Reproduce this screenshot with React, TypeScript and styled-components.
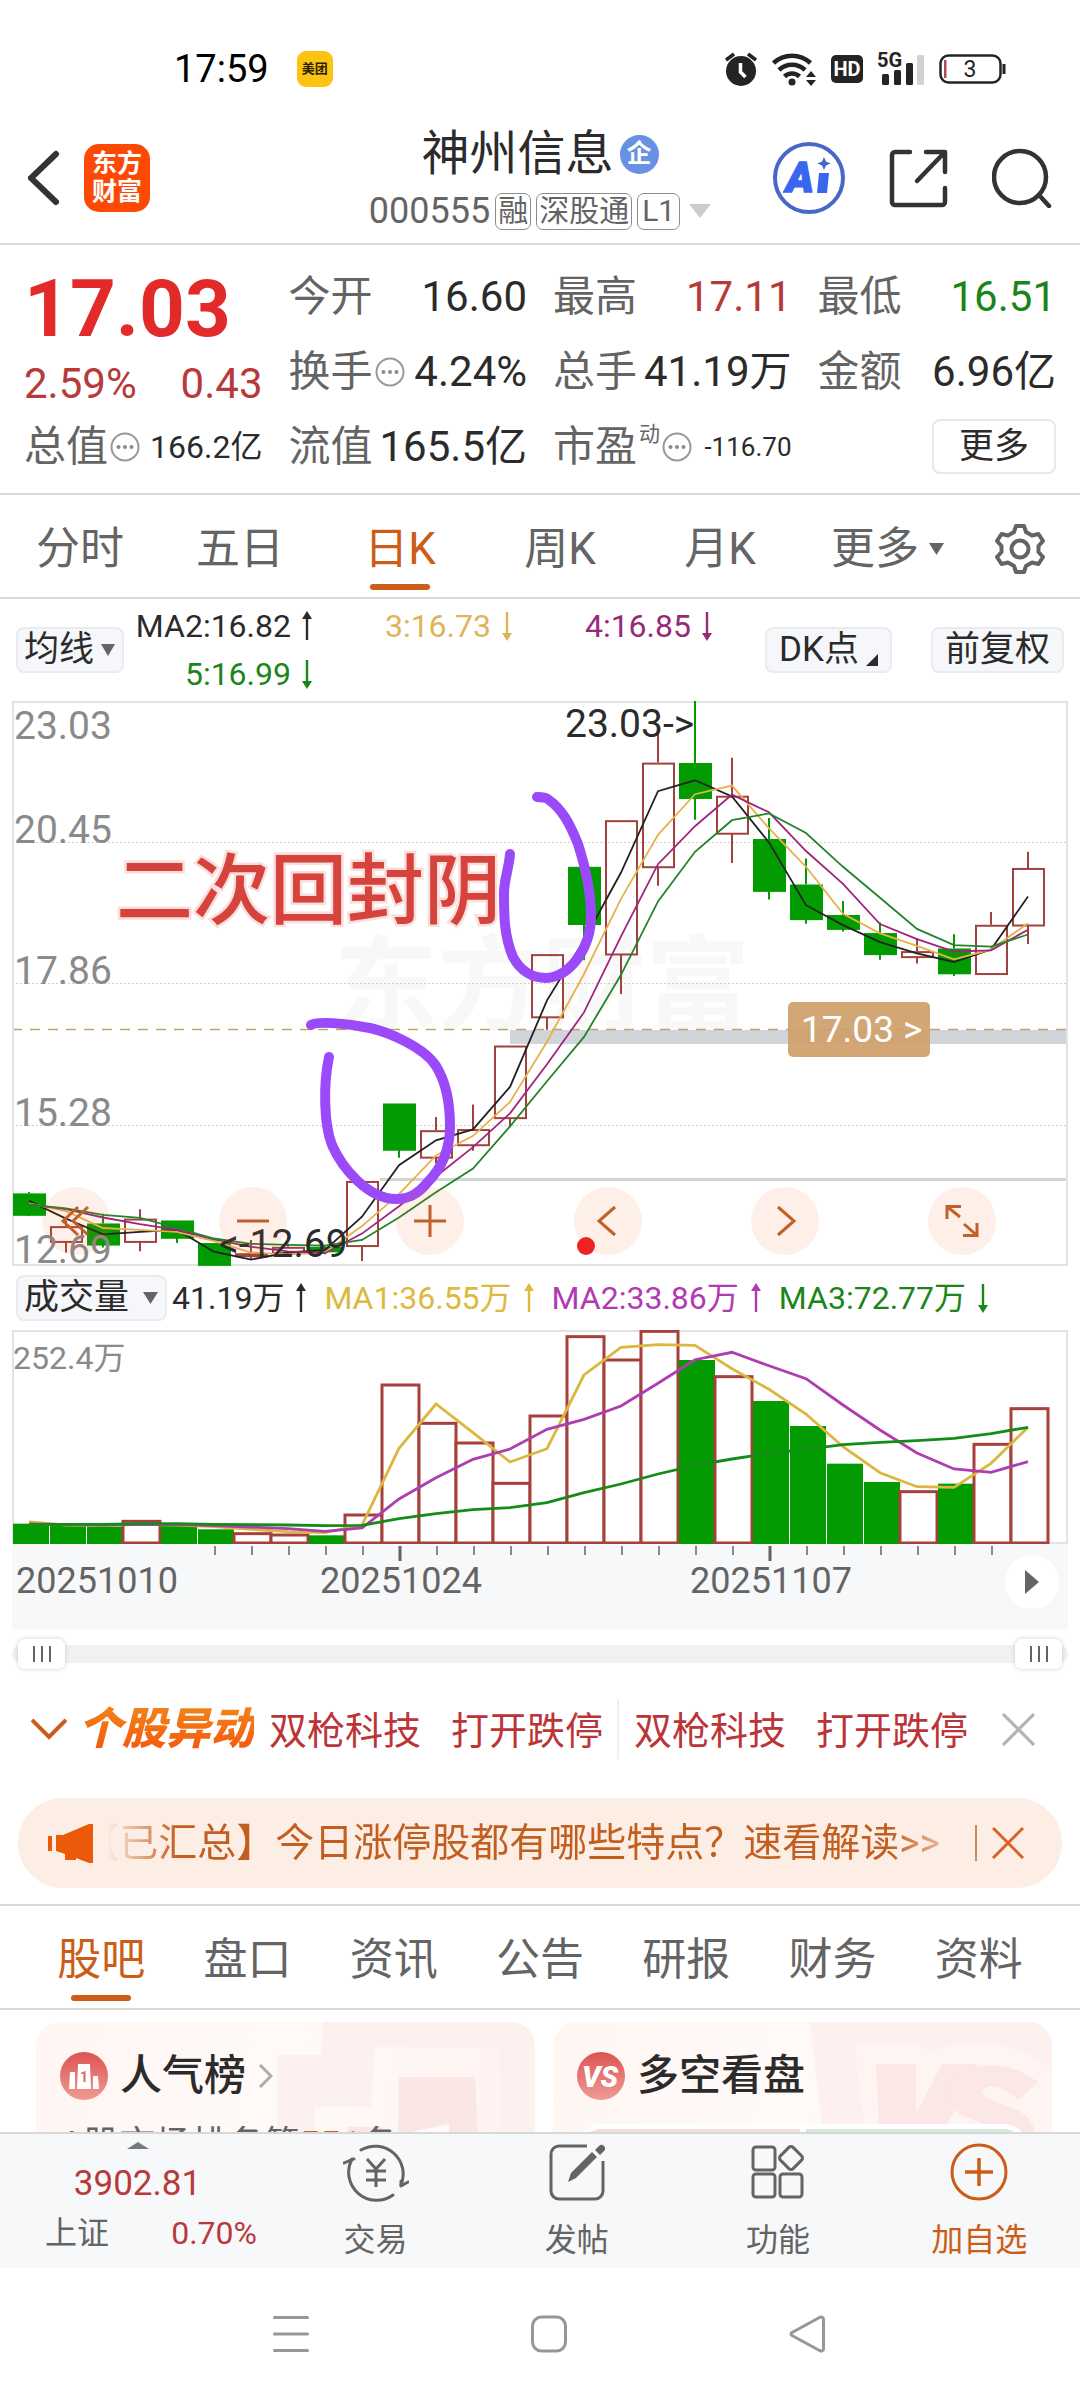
import React from "react";
import styled, { createGlobalStyle, css } from "styled-components";

const INK = "#2b2b2b";
const GREY = "#646464";
const ORANGE = "#cc5c18";
const RED = "#b73a3a";
const GREEN = "#1b851b";
const LINE = "#d8d8d8";

const Global = createGlobalStyle`
  * { box-sizing: border-box; }
  body {
    margin: 0;
    background: #fff;
    color: ${INK};
    font-family: Roboto, "Noto Sans CJK SC", sans-serif;
  }
  button, select, input { font: inherit; color: inherit; margin: 0; padding: 0; border: 0; background: none; }
  button { cursor: pointer; }
  a { color: inherit; text-decoration: none; }
  svg { display: block; flex: none; }
  h1, h2, p, dl, dd, dt { margin: 0; font-weight: 400; }
`;

const Shell = styled.div`
  display: flex;
  flex-direction: column;
  min-height: 100vh;
`;

/* ---------- status bar ---------- */

const StatusBar = styled.div`
  display: flex;
  align-items: center;
  justify-content: space-between;
  height: 108px;
  padding: 30px 74px 0 174px;
`;
const Cluster = styled.div<{ $gap: number }>`
  display: flex;
  align-items: center;
  gap: ${(p) => p.$gap}px;
`;
const Clock = styled.time`
  font-size: 38px;
  line-height: 44px;
  color: #000;
`;
const Meituan = styled.span`
  display: grid;
  place-items: center;
  width: 36px;
  height: 36px;
  border-radius: 9px;
  background: #fbc413;
  color: #2b2300;
  font-size: 13px;
  line-height: 16px;
  font-weight: 700;
`;
const HdBadge = styled.span`
  display: grid;
  place-items: center;
  width: 32px;
  height: 28px;
  border-radius: 5px;
  background: #242424;
  color: #fff;
  font-size: 20px;
  line-height: 24px;
  font-weight: 700;
`;

/* ---------- header ---------- */

const Header = styled.header`
  display: grid;
  grid-template-columns: 1fr auto 1fr;
  align-items: center;
  height: 137px;
  padding: 5px 28px 0;
  border-bottom: 2px solid ${LINE};
`;
const IconButton = styled.button`
  display: block;
`;
const Brand = styled.a`
  display: grid;
  place-items: center;
  align-content: center;
  width: 66px;
  height: 68px;
  border-radius: 15px;
  background: #fc4a05;
  color: #fff;
  font-size: 25px;
  line-height: 28px;
  font-weight: 700;
  text-align: center;
`;
const Titles = styled.div`
  display: flex;
  flex-direction: column;
  align-items: center;
  gap: 10px;
`;
const StockName = styled.h1`
  display: flex;
  align-items: center;
  gap: 6px;
  font-size: 48px;
  line-height: 56px;
`;
const EntBadge = styled.span`
  display: grid;
  place-items: center;
  width: 39px;
  height: 39px;
  border-radius: 50%;
  background: #6891e3;
  color: #fff;
  font-size: 25px;
  line-height: 28px;
  font-weight: 700;
`;
const SubTitle = styled.div`
  display: flex;
  align-items: center;
  gap: 5px;
  color: ${GREY};
  font-size: 36px;
  line-height: 38px;
`;
const Tag = styled.span`
  height: 37px;
  padding: 0 2px;
  border: 1px solid #8c8c8c;
  border-radius: 7px;
  font-size: 30px;
  line-height: 34px;
`;
const TagWide = styled(Tag)`
  padding: 0 4px;
`;
const HeaderTools = styled.div`
  display: flex;
  justify-content: flex-end;
  align-items: center;
  gap: 44px;
`;

/* ---------- quote ---------- */

const Quote = styled.section`
  display: grid;
  grid-template-columns: repeat(4, 1fr);
  column-gap: 26px;
  padding: 14px 24px 9px;
  border-bottom: 2px solid ${LINE};
`;
const QuoteColumn = styled.dl`
  display: flex;
  flex-direction: column;
  min-width: 0;
`;
const Price = styled.div`
  height: 100px;
  color: #e22a2a;
  font-size: 80px;
  line-height: 100px;
  font-weight: 700;
`;
const Change = styled.div`
  display: flex;
  justify-content: space-between;
  height: 50px;
  color: ${RED};
  font-size: 42px;
  line-height: 50px;
`;
const Cell = styled.div`
  display: flex;
  align-items: center;
  justify-content: space-between;
  height: 75px;
  white-space: nowrap;
`;
const Label = styled.dt`
  display: flex;
  align-items: center;
  gap: 2px;
  color: ${GREY};
  font-size: 42px;
  line-height: 48px;
`;
const Sup = styled.sup`
  align-self: flex-start;
  font-size: 21px;
  line-height: 22px;
`;
const Value = styled.dd<{ $tone?: string; $size?: number }>`
  color: ${(p) => p.$tone ?? INK};
  font-size: ${(p) => p.$size ?? 42}px;
  line-height: 48px;
`;
const MoreButton = styled.button`
  width: 124px;
  height: 55px;
  margin-left: auto;
  border: 2px solid #e6e8ea;
  border-radius: 8px;
  font-size: 35px;
  line-height: 48px;
`;

/* ---------- tabs ---------- */

const PeriodTabs = styled.nav`
  display: grid;
  grid-template-columns: repeat(5, 160fr) 175fr 90fr;
  height: 104px;
  padding-right: 15px;
  border-bottom: 2px solid ${LINE};
`;
const SectionTabs = styled.nav`
  display: grid;
  grid-template-columns: repeat(7, 1fr);
  height: 106px;
  padding: 0 28px;
  border-top: 2px solid ${LINE};
  border-bottom: 2px solid ${LINE};
`;
const Tab = styled.button<{ $active?: boolean }>`
  position: relative;
  display: flex;
  align-items: center;
  justify-content: center;
  gap: 10px;
  padding-top: 6px;
  color: ${(p) => (p.$active ? ORANGE : GREY)};
  font-size: 44px;
  line-height: 52px;
  white-space: nowrap;
  ${(p) =>
    p.$active &&
    css`
      &::after {
        content: "";
        position: absolute;
        left: 50%;
        bottom: 7px;
        width: 60px;
        height: 6px;
        margin-left: -30px;
        border-radius: 3px;
        background: ${ORANGE};
      }
    `}
`;

/* ---------- chart ---------- */

const Toolbar = styled.div`
  display: flex;
  align-items: center;
  height: 102px;
  padding: 0 16px;
`;
const SelectBox = styled.label<{ $width: number }>`
  position: relative;
  flex: none;
  width: ${(p) => p.$width}px;
  color: ${GREY};
  svg { position: absolute; right: 9px; top: 17px; pointer-events: none; }
  select {
    appearance: none;
    width: 100%;
    height: 46px;
    padding-left: 6px;
    border: 2px solid #e9ebee;
    border-radius: 8px;
    background: #f6f7fa;
    color: ${INK};
    font-size: 35px;
    line-height: 42px;
  }
`;
const ToolButton = styled.button`
  display: flex;
  align-items: flex-end;
  gap: 7px;
  height: 46px;
  padding: 0 12px;
  border: 2px solid #e9ebee;
  border-radius: 8px;
  background: #f6f7fa;
  font-size: 35px;
  line-height: 42px;
  white-space: nowrap;
`;
const ToolButtons = styled.div`
  display: flex;
  gap: 39px;
  margin-left: auto;
`;
const MaGrid = styled.div`
  display: grid;
  grid-template-columns: 180px 200px 200px;
  grid-auto-rows: 48px;
  margin-left: 8px;
  justify-items: end;
  align-items: center;
`;
const MaItem = styled.span<{ $tone: string; $gap: number }>`
  display: flex;
  align-items: center;
  gap: ${(p) => p.$gap}px;
  color: ${(p) => p.$tone};
  font-size: 32px;
  line-height: 40px;
  white-space: nowrap;
`;
const ChartArea = styled.section`
  padding: 0 12px;
`;
const Canvas = styled.div`
  position: relative;
`;
const Plot = styled.svg`
  width: 100%;
  height: auto;
`;
const ChartControls = styled.div`
  position: absolute;
  left: 30px;
  right: 72px;
  bottom: 11px;
  display: flex;
  justify-content: space-between;
`;
const RoundButton = styled.button`
  display: grid;
  place-items: center;
  width: 68px;
  height: 68px;
  border-radius: 50%;
  background: rgba(250, 100, 30, 0.1);
  color: #c26127;
`;
const RedDot = styled.span`
  position: absolute;
  left: 53.5%;
  bottom: 11px;
  width: 18px;
  height: 18px;
  border-radius: 50%;
  background: #ee2424;
`;
const VolumeBar = styled.div`
  display: flex;
  align-items: center;
  height: 64px;
  padding-left: 4px;
`;
const VolumeItems = styled.div`
  display: flex;
  gap: 18px;
  margin-left: 5px;
`;
const Axis = styled.div`
  position: relative;
  background: #f7f8fa;
`;
const PlayButton = styled.button`
  position: absolute;
  right: 9px;
  top: 11px;
  display: grid;
  place-items: center;
  width: 54px;
  height: 54px;
  border-radius: 50%;
  background: #fff;
  color: ${GREY};
`;
const Range = styled.div`
  position: relative;
  height: 30px;
  margin: 9px 0 30px;
  &::before {
    content: "";
    position: absolute;
    inset: 6px 0;
    border-radius: 9px;
    background: #f1f1f4;
  }
  input {
    position: absolute;
    inset: 0;
    width: calc(100% - 12px);
    height: 30px;
    margin: 0 6px;
    appearance: none;
    pointer-events: none;
  }
  input::-webkit-slider-thumb {
    appearance: none;
    width: 47px;
    height: 30px;
    border-radius: 7px;
    background:
      linear-gradient(${GREY}, ${GREY}) 15px 7px / 2px 16px no-repeat,
      linear-gradient(${GREY}, ${GREY}) 23px 7px / 2px 16px no-repeat,
      linear-gradient(${GREY}, ${GREY}) 31px 7px / 2px 16px no-repeat,
      #fff;
    box-shadow: 0 0 5px rgba(0, 0, 0, 0.18);
    pointer-events: auto;
  }
`;

/* ---------- notices ---------- */

const MoveRow = styled.section`
  display: flex;
  align-items: center;
  height: 60px;
  padding: 0 45px 0 31px;
`;
const MoveTitle = styled.h2`
  margin: 0 15px 0 11px;
  background: linear-gradient(#f08a1c, #f5520c);
  background-clip: text;
  color: transparent;
  font-size: 44px;
  line-height: 56px;
  font-weight: 900;
  font-style: italic;
`;
const MoveLink = styled.a`
  display: flex;
  gap: 30px;
  padding-top: 5px;
  color: #bb3438;
  font-size: 38px;
  line-height: 55px;
  white-space: nowrap;
  & + & {
    margin-left: 14px;
    padding-left: 15px;
    border-left: 2px solid #efefef;
  }
`;
const CloseButton = styled.button<{ $tone: string }>`
  margin-left: auto;
  color: ${(p) => p.$tone};
`;
const Banner = styled.section`
  display: flex;
  align-items: center;
  height: 90px;
  margin: 39px 18px 16px;
  padding: 0 38px 0 30px;
  border-radius: 45px;
  background: #fdeee5;
  color: #c25f20;
`;
const Ticker = styled.a`
  flex: 1;
  display: flex;
  justify-content: flex-end;
  margin: 0 35px 0 13px;
  overflow: hidden;
  font-size: 39px;
  line-height: 50px;
  white-space: nowrap;
  mask-image: linear-gradient(90deg, transparent, #000 70px, #000 calc(100% - 50px), rgba(0, 0, 0, 0.4));
`;
const BannerClose = styled(CloseButton)`
  height: 36px;
  padding: 2px 0 2px 15px;
  border-left: 2px solid #c98a63;
`;

/* ---------- cards ---------- */

const Cards = styled.section`
  display: grid;
  grid-template-columns: 1fr 1fr;
  gap: 18px;
  height: 122px;
  padding: 12px 28px 0 36px;
  overflow: hidden;
`;
const Card = styled.article`
  position: relative;
  height: 240px;
  padding: 30px 24px;
  border-radius: 24px;
  overflow: hidden;
  background: linear-gradient(100deg, #fff6f3, #fffaf8 50%, #fef1ef);
`;
const Art = styled.svg`
  position: absolute;
  right: 0;
  top: 0;
`;
const CardHead = styled.h2`
  position: relative;
  display: flex;
  align-items: center;
  gap: 12px;
  font-size: 42px;
  line-height: 48px;
  font-weight: 500;
`;
const CardText = styled.p`
  position: relative;
  margin-top: 21px;
  color: ${GREY};
  font-size: 36px;
  line-height: 48px;
  b { color: ${ORANGE}; font-weight: 500; }
`;
const Versus = styled.div`
  position: relative;
  display: grid;
  grid-template-columns: 1fr 1fr;
  gap: 6px;
  height: 48px;
  margin-top: 24px;
  border: 5px solid #fff;
  border-radius: 24px;
  background: #fff;
  overflow: hidden;
`;
const Side = styled.span<{ $tone: string }>`
  background: ${(p) => p.$tone};
`;

/* ---------- bottom ---------- */

const BottomBar = styled.nav`
  position: relative;
  display: grid;
  grid-template-columns: 275px repeat(4, 1fr);
  height: 136px;
  border-top: 2px solid #d6d9dc;
  background: #f7f8fa;
`;
const IndexLink = styled.a`
  display: flex;
  flex-direction: column;
  align-items: center;
  padding-top: 8px;
  color: ${RED};
  font-size: 35px;
  line-height: 40px;
`;
const IndexValue = styled.span`
  margin-top: 15px;
`;
const IndexRow = styled.span`
  display: flex;
  justify-content: space-between;
  align-self: stretch;
  margin-top: 11px;
  padding: 0 18px 0 45px;
  font-size: 32px;
  line-height: 36px;
`;
const Muted = styled.span`
  color: ${GREY};
`;
const BottomItem = styled.button<{ $active?: boolean }>`
  display: flex;
  flex-direction: column;
  align-items: center;
  gap: 19px;
  padding-top: 8px;
  color: ${(p) => (p.$active ? ORANGE : GREY)};
  font-size: 32px;
  line-height: 38px;
`;
const SystemNav = styled.nav`
  display: flex;
  align-items: center;
  justify-content: center;
  flex: 1 0 131px;
  gap: 222px;
  padding-left: 18px;
  color: #979797;
`;

/* ---------- drawings ---------- */

const Caret = ({ w = 15, h = 12 }: { w?: number; h?: number }) => (
  <svg width={w} height={h} viewBox="0 0 15 12" preserveAspectRatio="none" aria-hidden="true">
    <path d="M0 0h15L7.500 12z" fill="currentColor" />
  </svg>
);

const Arrow = ({ up }: { up?: boolean }) => (
  <svg width="10" height="30" viewBox="0 0 10 30" aria-hidden="true">
    <g fill="currentColor" transform={up ? undefined : "rotate(180 5 15)"}>
      <path d="M5 0l5 8H0z" />
      <path d="M3.800 6h2.400v23H3.800z" />
    </g>
  </svg>
);

const Dots = () => (
  <svg width="30" height="30" viewBox="0 0 30 30" aria-hidden="true">
    <circle cx="15" cy="15" r="13.500" fill="none" stroke="#999" strokeWidth="2" />
    <g fill="#8a8a8a">
      <circle cx="8.500" cy="15" r="2" />
      <circle cx="15" cy="15" r="2" />
      <circle cx="21.500" cy="15" r="2" />
    </g>
  </svg>
);

const Cross = ({ size, stroke }: { size: number; stroke: number }) => (
  <svg width={size} height={size} viewBox="0 0 32 32" aria-hidden="true">
    <path d="M1 1l30 30M31 1L1 31" stroke="currentColor" strokeWidth={stroke} />
  </svg>
);

const StatusIcons = () => (
  <Cluster $gap={15}>
    <svg width="32" height="34" viewBox="0 0 32 34" aria-hidden="true">
      <circle cx="16" cy="19" r="15" fill="#242424" />
      <path d="M1 8l8-6M31 8l-8-6" stroke="#242424" strokeWidth="3.500" />
      <path d="M15.500 11v9l5 5" stroke="#fff" strokeWidth="3.500" fill="none" />
    </svg>
    <svg width="44" height="34" viewBox="0 0 44 34" aria-hidden="true">
      <g fill="none" stroke="#242424" strokeWidth="4.500">
        <path d="M1.500 11a27 27 0 0 1 37 0" />
        <path d="M7 18a19 19 0 0 1 26 0" />
        <path d="M12.500 24.500a11 11 0 0 1 15 0" />
      </g>
      <circle cx="20" cy="30" r="3.500" fill="#242424" />
      <path d="M39 19l5 6H34zM39 34l5-6H34z" fill="#242424" />
    </svg>
    <HdBadge>HD</HdBadge>
    <svg width="46" height="34" viewBox="0 0 46 34" overflow="visible" aria-hidden="true">
      <text x="-1" y="15" fontSize="20" fontWeight="700" fill="#242424">5G</text>
      <rect x="4" y="22" width="7" height="11" rx="1.500" fill="#242424" />
      <rect x="16" y="18" width="7" height="15" rx="1.500" fill="#242424" />
      <rect x="28" y="11" width="7" height="22" rx="1.500" fill="#242424" />
      <rect x="39" y="3" width="7" height="30" rx="1.500" fill="#d2d2d2" />
    </svg>
    <svg width="67" height="30" viewBox="0 0 67 30" aria-hidden="true">
      <rect x="1.500" y="1.500" width="60" height="27" rx="8" fill="none" stroke="#242424" strokeWidth="2.500" />
      <rect x="5" y="6" width="2.500" height="18" fill="#b04a55" />
      <path d="M65 10v10" stroke="#242424" strokeWidth="3" />
      <text x="31" y="23" fontSize="23" textAnchor="middle" fill="#242424">3</text>
    </svg>
  </Cluster>
);

const AiIcon = () => (
  <svg width="72" height="74" viewBox="0 0 72 74" aria-hidden="true">
    <circle cx="36" cy="37" r="34" fill="#fff" stroke="#4768c6" strokeWidth="4" />
    <text x="13" y="51" fontSize="42" fontWeight="900" fontStyle="italic" fill="#3966ef" stroke="#3966ef" strokeWidth="1.500">A</text>
    <path d="M46 32h10l-2 20h-10z" fill="#3966ef" />
    <path d="M51 16l2 4.500 4.500 2-4.500 2-2 4.500-2-4.500-4.500-2 4.500-2z" fill="#4768c6" />
  </svg>
);

const GearIcon = () => (
  <svg width="52" height="52" viewBox="0 0 52 52" fill="none" stroke="currentColor" strokeWidth="4" strokeLinejoin="round" aria-hidden="true">
    <path d="M22 3h8l2 6 6 3.500 6.500-1.500 4.500 7-4.500 5v6l4.500 5-4.500 7-6.500-1.500L32 43l-2 6h-8l-2-6-6-3.500L7.500 41 3 34l4.500-5v-6L3 18l4.500-7 6.500 1.500L20 9z" />
    <circle cx="26" cy="26" r="8.500" />
  </svg>
);

/* ---------- chart data ---------- */

type Candle = [up: boolean, top: number, bottom: number, high: number, low: number];
const candles: Candle[] = [
  [false, 1338, 1395, 1334, 1398], [true, 1425, 1467, 1410, 1495], [false, 1418, 1474, 1392, 1482],
  [true, 1405, 1467, 1380, 1492], [false, 1410, 1456, 1410, 1470], [false, 1470, 1528, 1470, 1533],
  [true, 1497, 1503, 1462, 1512], [true, 1480, 1497, 1472, 1500], [false, 1480, 1492, 1478, 1500],
  [true, 1305, 1478, 1305, 1518], [false, 1099, 1222, 1099, 1243], [true, 1170, 1243, 1135, 1258],
  [true, 1167, 1210, 1102, 1225], [true, 945, 1138, 945, 1162], [true, 702, 870, 702, 903],
  [false, 470, 622, 470, 718], [true, 346, 703, 346, 808], [true, 193, 471, 110, 520],
  [false, 194, 287, 28, 345], [true, 281, 382, 180, 460], [false, 396, 534, 340, 557],
  [false, 517, 609, 448, 621], [false, 598, 635, 561, 642], [false, 646, 702, 618, 717],
  [true, 694, 710, 660, 727], [false, 687, 753, 649, 760], [true, 624, 755, 590, 755],
  [true, 473, 626, 430, 675],
];
const averages: [string, number[]][] = [
  ["#222222", [1358, 1405, 1447, 1440, 1435, 1493, 1514, 1495, 1488, 1400, 1263, 1197, 1168, 1055, 825, 665, 485, 269, 240, 283, 405, 572, 625, 670, 700, 723, 690, 549]],
  ["#e8b04b", [1365, 1385, 1430, 1435, 1440, 1465, 1495, 1500, 1495, 1425, 1340, 1237, 1185, 1095, 935, 755, 555, 385, 277, 254, 368, 470, 595, 647, 680, 716, 690, 620]],
  ["#a0257a", [1367, 1380, 1402, 1420, 1435, 1460, 1480, 1492, 1497, 1445, 1372, 1293, 1215, 1125, 995, 857, 655, 463, 362, 278, 325, 428, 515, 622, 662, 695, 692, 637]],
  ["#23842a", [1368, 1378, 1395, 1403, 1430, 1458, 1472, 1475, 1477, 1462, 1402, 1335, 1272, 1160, 1040, 922, 757, 562, 430, 346, 328, 380, 470, 552, 635, 678, 682, 650]],
];
const volumes: [boolean, number][] = [
  [false, 791], [false, 798], [false, 800], [true, 781], [false, 797], [false, 808], [true, 818],
  [true, 822], [false, 826], [true, 762], [true, 372], [true, 487], [true, 546], [true, 667],
  [true, 465], [true, 227], [true, 297], [true, 211], [false, 300], [true, 347], [false, 423],
  [false, 498], [false, 611], [false, 666], [true, 692], [false, 671], [true, 550], [true, 443],
];
const volumeAverages: [string, number[]][] = [
  ["#dcb63e", [786, 795, 797, 793, 795, 800, 808, 815, 818, 795, 565, 432, 518, 606, 566, 345, 262, 254, 256, 326, 388, 462, 560, 638, 680, 682, 610, 502]],
  ["#ad3db0", [792, 794, 795, 793, 794, 797, 801, 806, 814, 804, 717, 653, 598, 567, 508, 478, 438, 370, 299, 277, 317, 356, 435, 510, 579, 627, 637, 605]],
  ["#148c18", [793, 793, 793, 791, 791, 793, 794, 795, 797, 796, 776, 761, 749, 743, 728, 698, 672, 642, 616, 597, 580, 568, 554, 547, 542, 535, 521, 502]],
];

const xAt = (i: number) => 29 + 37 * i;
const priceY = (v: number) => 690 + v / 2.658;
const volumeY = (v: number) => 1260 + v / 3;
const points = (values: number[], y: (v: number) => number) =>
  values.map((v, i) => `${xAt(i)},${y(v).toFixed(1)}`).join(" ");

const CANDLE_RED = "#a0433f";
const CANDLE_GREEN = "#029c02";

const priceLabels: [string, number][] = [
  ["23.03", 739], ["20.45", 843], ["17.86", 984], ["15.28", 1126], ["12.69", 1263],
];

const PriceChart = () => (
  <Plot viewBox="12 701 1056 565" role="img" aria-label="日K线图">
    <text x="334" y="1023" fontSize="104" fontWeight="700" fill="#f8f8f8">东方财富</text>
    <g stroke="#cfcfcf" strokeWidth="1" strokeDasharray="2 2">
      <path d="M12 842.500H1067M12 983.500H1067M12 1125.500H1067" />
    </g>
    <rect x="510" y="1030" width="557" height="14" fill="#d1d5d9" />
    <rect x="380" y="1178" width="687" height="3" fill="#d1d4d8" />
    <path d="M12 1029.500H1067" stroke="#c3a468" strokeWidth="1.500" strokeDasharray="10 8" />
    <rect x="13" y="702" width="1054" height="563" fill="none" stroke="#e3e3e3" strokeWidth="2" />
    {candles.map(([up, top, bottom, high, low], i) => {
      const x = xAt(i);
      const color = up ? CANDLE_RED : CANDLE_GREEN;
      return (
        <g key={i} stroke={color} strokeWidth="2">
          <path d={`M${x} ${priceY(high)}V${priceY(top)}M${x} ${priceY(bottom)}V${priceY(low)}`} />
          <rect x={x - 15} y={priceY(top) + 1} width="31" height={Math.max(priceY(bottom) - priceY(top) - 1, 2)} fill={up ? "none" : color} />
        </g>
      );
    })}
    {averages.map(([color, values]) => (
      <polyline key={color} points={points(values, priceY)} fill="none" stroke={color} strokeWidth="1.800" />
    ))}
    <g fontSize="39" fill="#8a8a8a">
      {priceLabels.map(([label, y]) => (
        <text key={label} x="14" y={y}>{label}</text>
      ))}
    </g>
    <g fontSize="39" fill={INK}>
      <text x="219" y="1257">&lt;-12.69</text>
      <text x="565" y="737">23.03-&gt;</text>
    </g>
    <rect x="788" y="1002" width="142" height="55" rx="5" fill="#d0a06a" fillOpacity="0.93" />
    <text x="801" y="1042" fontSize="37" fill="#fff">17.03 &gt;</text>
    <text x="116" y="918" fontSize="77" fontWeight="500" fill="#d6433d" stroke="#f9dedc" strokeWidth="5" paintOrder="stroke">二次回封阴</text>
    <g fill="none" stroke="#9b4afa" strokeWidth="10" strokeLinecap="round" strokeLinejoin="round">
      <path d="M311 1025C316 1021 345 1023 370 1028C388 1032 424 1047 436 1066C446 1082 450 1104 450 1126C450 1148 443 1167 427 1183C418 1194 409 1199 396 1199C368 1199 342 1168 332 1145C324 1125 323 1085 329 1057" />
      <path d="M510 854C509 868 504 880 504 893C504 915 504 936 513 957C520 970 531 978 547 978C560 977 570 969 578 958C587 945 591 932 591 916C591 892 585 866 578 844C570 824 562 809 549 800C546 797 541 797 537 797" />
    </g>
  </Plot>
);

const VolumeChart = () => (
  <Plot viewBox="12 1330 1056 214" role="img" aria-label="成交量图">
    <rect x="13" y="1331" width="1054" height="212" fill="none" stroke="#e3e3e3" strokeWidth="2" />
    {volumes.map(([up, top], i) =>
      up ? (
        <rect key={i} x={xAt(i) - 17} y={volumeY(top) + 1} width="37" height={1542 - volumeY(top)} fill="#fff" stroke="#a5403b" strokeWidth="3" />
      ) : (
        <rect key={i} x={xAt(i) - 16} y={volumeY(top)} width="36" height={1544 - volumeY(top)} fill={CANDLE_GREEN} />
      ),
    )}
    {volumeAverages.map(([color, values]) => (
      <polyline key={color} points={points(values, volumeY)} fill="none" stroke={color} strokeWidth="2.800" />
    ))}
    <text x="13" y="1369" fontSize="32" fill="#8a8a8a">252.4万</text>
  </Plot>
);

const DateAxis = () => (
  <Plot viewBox="12 1544 1056 86" role="img" aria-label="日期轴">
    {Array.from({ length: 22 }, (_, k) => k + 5).map((i) => (
      <path
        key={i}
        d={`M${xAt(i) + 1} 1546V${i % 10 === 0 ? 1561 : 1555}`}
        stroke={GREY}
        strokeWidth={i % 10 === 0 ? 3 : 1.5}
      />
    ))}
    <g fontSize="36" fill={GREY}>
      <text x="16" y="1593">20251010</text>
      <text x="401" y="1593" textAnchor="middle">20251024</text>
      <text x="771" y="1593" textAnchor="middle">20251107</text>
    </g>
  </Plot>
);

const controls: [string, React.ReactNode][] = [
  ["最早", <path key="a" d="M19 3L4 17l15 14M29 3L14 17l15 14" />],
  ["缩小", <path key="b" d="M1 17h32" />],
  ["放大", <path key="c" d="M1 17h32M17 1v32" />],
  ["向左", <path key="d" d="M24 3L8 17l16 14" />],
  ["向右", <path key="e" d="M10 3l16 14-16 14" />],
  ["全屏", <path key="f" d="M2 15V2.500h14M2 2.500L15 13M32 19v12.500H18M32 31.500L19 20" />],
];

/* ---------- page ---------- */

export default function App() {
  return (
    <Shell>
      <Global />
      <StatusBar>
        <Cluster $gap={28}>
          <Clock>17:59</Clock>
          <Meituan>美团</Meituan>
        </Cluster>
        <StatusIcons />
      </StatusBar>

      <Header>
        <Cluster $gap={24}>
          <IconButton aria-label="返回">
            <svg width="32" height="56" viewBox="0 0 32 56" aria-hidden="true">
              <path d="M28 4L3 28l25 24" fill="none" stroke="#333" strokeWidth="6" strokeLinecap="round" />
            </svg>
          </IconButton>
          <Brand href="#home">
            <span>东方</span>
            <span>财富</span>
          </Brand>
        </Cluster>
        <Titles>
          <StockName>
            神州信息<EntBadge>企</EntBadge>
          </StockName>
          <SubTitle>
            <span>000555</span>
            <Tag>融</Tag>
            <Tag>深股通</Tag>
            <TagWide>L1</TagWide>
            <svg width="26" height="14" viewBox="0 0 26 14" aria-hidden="true">
              <path d="M4 0h22L15 14z" fill="#ccc" />
            </svg>
          </SubTitle>
        </Titles>
        <HeaderTools>
          <IconButton aria-label="AI">
            <AiIcon />
          </IconButton>
          <IconButton aria-label="分享">
            <svg width="59" height="59" viewBox="0 0 59 59" fill="none" stroke="#333" strokeWidth="4.500" strokeLinecap="round" strokeLinejoin="round" aria-hidden="true">
              <path d="M21 3H6a3 3 0 0 0-3 3v47a3 3 0 0 0 3 3h47a3 3 0 0 0 3-3V39M37 3h19v20M55 4L28 32" />
            </svg>
          </IconButton>
          <IconButton aria-label="搜索">
            <svg width="60" height="60" viewBox="0 0 60 60" fill="none" stroke="#333" strokeWidth="4.500" strokeLinecap="round" aria-hidden="true">
              <circle cx="28" cy="29" r="26" />
              <path d="M47 47l10 11" />
            </svg>
          </IconButton>
        </HeaderTools>
      </Header>

      <Quote>
        <QuoteColumn>
          <Price>17.03</Price>
          <Change>
            <span>2.59%</span>
            <span>0.43</span>
          </Change>
          <Cell>
            <Label>总值<Dots /></Label>
            <Value $size={32}>166.2亿</Value>
          </Cell>
        </QuoteColumn>
        <QuoteColumn>
          <Cell><Label>今开</Label><Value>16.60</Value></Cell>
          <Cell><Label>换手<Dots /></Label><Value>4.24%</Value></Cell>
          <Cell><Label>流值</Label><Value>165.5亿</Value></Cell>
        </QuoteColumn>
        <QuoteColumn>
          <Cell><Label>最高</Label><Value $tone={RED}>17.11</Value></Cell>
          <Cell><Label>总手</Label><Value>41.19万</Value></Cell>
          <Cell>
            <Label>市盈<Sup>动</Sup><Dots /></Label>
            <Value $size={26}>-116.70</Value>
          </Cell>
        </QuoteColumn>
        <QuoteColumn>
          <Cell><Label>最低</Label><Value $tone={GREEN}>16.51</Value></Cell>
          <Cell><Label>金额</Label><Value>6.96亿</Value></Cell>
          <Cell><MoreButton>更多</MoreButton></Cell>
        </QuoteColumn>
      </Quote>

      <PeriodTabs>
        <Tab>分时</Tab>
        <Tab>五日</Tab>
        <Tab $active>日K</Tab>
        <Tab>周K</Tab>
        <Tab>月K</Tab>
        <Tab>更多<Caret /></Tab>
        <Tab aria-label="设置"><GearIcon /></Tab>
      </PeriodTabs>

      <Toolbar>
        <SelectBox $width={108}>
          <select aria-label="主图指标"><option>均线</option></select>
          <Caret w={14} />
        </SelectBox>
        <MaGrid>
          <MaItem $gap={11} $tone={INK}>MA2:16.82<Arrow up /></MaItem>
          <MaItem $gap={11} $tone="#dfb458">3:16.73<Arrow /></MaItem>
          <MaItem $gap={11} $tone="#962a78">4:16.85<Arrow /></MaItem>
          <MaItem $gap={11} $tone={GREEN}>5:16.99<Arrow /></MaItem>
        </MaGrid>
        <ToolButtons>
          <ToolButton>
            DK点
            <svg width="12" height="17" viewBox="0 0 12 17" aria-hidden="true">
              <path d="M12 0v12H0z" fill={INK} />
            </svg>
          </ToolButton>
          <ToolButton>前复权</ToolButton>
        </ToolButtons>
      </Toolbar>

      <ChartArea>
        <Canvas>
          <PriceChart />
          <ChartControls>
            {controls.map(([name, shape]) => (
              <RoundButton key={name} aria-label={name}>
                <svg width="34" height="34" viewBox="0 0 34 34" fill="none" stroke="currentColor" strokeWidth="3" aria-hidden="true">
                  {shape}
                </svg>
              </RoundButton>
            ))}
          </ChartControls>
          <RedDot />
        </Canvas>
        <VolumeBar>
          <SelectBox $width={151}>
            <select aria-label="副图指标"><option>成交量</option></select>
            <Caret />
          </SelectBox>
          <VolumeItems>
            <MaItem $gap={12} $tone={INK}>41.19万<Arrow up /></MaItem>
            <MaItem $gap={12} $tone="#dcb93f">MA1:36.55万<Arrow up /></MaItem>
            <MaItem $gap={12} $tone="#b03ab2">MA2:33.86万<Arrow up /></MaItem>
            <MaItem $gap={12} $tone={GREEN}>MA3:72.77万<Arrow /></MaItem>
          </VolumeItems>
        </VolumeBar>
        <VolumeChart />
        <Axis>
          <DateAxis />
          <PlayButton aria-label="播放">
            <svg width="14" height="24" viewBox="0 0 14 24" aria-hidden="true">
              <path d="M0 0l14 12L0 24z" fill="currentColor" />
            </svg>
          </PlayButton>
        </Axis>
        <Range>
          <input type="range" min="0" max="100" defaultValue="0" aria-label="起始日期" />
          <input type="range" min="0" max="100" defaultValue="100" aria-label="结束日期" />
        </Range>
      </ChartArea>

      <MoveRow>
        <IconButton aria-label="展开">
          <svg width="36" height="22" viewBox="0 0 36 22" aria-hidden="true">
            <path d="M1 2l17 17L35 2" fill="none" stroke={ORANGE} strokeWidth="4" />
          </svg>
        </IconButton>
        <MoveTitle>个股异动</MoveTitle>
        <MoveLink href="#move-1"><span>双枪科技</span><span>打开跌停</span></MoveLink>
        <MoveLink href="#move-2"><span>双枪科技</span><span>打开跌停</span></MoveLink>
        <CloseButton $tone="#b3b3b3" aria-label="关闭异动"><Cross size={33} stroke={3} /></CloseButton>
      </MoveRow>

      <Banner>
        <svg width="46" height="40" viewBox="0 0 46 40" fill="#ea5a08" aria-hidden="true">
          <path d="M0 13h4v15H0zM8 12h7L41 1h4v39h-4l-13-5v2h-11v-6l-9-3z" />
        </svg>
        <Ticker href="#summary">【已汇总】今日涨停股都有哪些特点？速看解读&gt;&gt;</Ticker>
        <BannerClose $tone="#d8602a" aria-label="关闭公告"><Cross size={32} stroke={3} /></BannerClose>
      </Banner>

      <SectionTabs>
        <Tab $active>股吧</Tab>
        <Tab>盘口</Tab>
        <Tab>资讯</Tab>
        <Tab>公告</Tab>
        <Tab>研报</Tab>
        <Tab>财务</Tab>
        <Tab>资料</Tab>
      </SectionTabs>

      <Cards>
        <Card>
          <Art width="258" height="120" viewBox="0 0 258 120" aria-hidden="true">
            <path d="M46 0h212v120H226L221 25H98l-4 60H38v35H0V33h44z" fill="#fdf1ef" />
            <path d="M122 55h76l3 65h-80z" fill="#fae6e4" />
            <path d="M70 105h36v15H70z" fill="#fae6e4" />
            <path d="M134 110l38-8v18h-38z" fill="#fffaf8" />
          </Art>
          <CardHead>
            <svg width="48" height="48" viewBox="0 0 48 48" aria-hidden="true">
              <defs>
                <linearGradient id="rank" x2="0" y2="1"><stop stopColor="#dc5450" /><stop offset="1" stopColor="#f09a94" /></linearGradient>
              </defs>
              <circle cx="24" cy="24" r="24" fill="url(#rank)" />
              <path d="M10 20h5v17H9zM18 12h12l1 25H17zM33 24h5l1 13h-6z" fill="#fff" />
              <text x="24" y="30" fontSize="14" fontWeight="700" textAnchor="middle" fill="#dc6a66">1</text>
            </svg>
            人气榜
            <svg width="15" height="24" viewBox="0 0 15 24" aria-hidden="true">
              <path d="M2 1l11 11L2 23" fill="none" stroke="#b0acab" strokeWidth="3" />
            </svg>
          </CardHead>
          <CardText>A股市场排名第<b>551</b>名</CardText>
        </Card>
        <Card>
          <Art width="242" height="120" viewBox="0 0 242 120" aria-hidden="true">
            <path d="M0 0h242v120H14z" fill="#fdf0ee" />
            <path d="M44 22h62l14 8c50-20 90-6 122 16v74H56z" fill="#fef4f2" />
            <path d="M66 42h40v50l26-50h36l-40 78H70z" fill="#fbe7e5" />
            <path d="M228 60c-40-30-88-16-90 12 0 30 44 20 50 48h38c0-44-52-34-54-50 6-12 24-4 36 8z" fill="#fbe7e5" />
          </Art>
          <CardHead>
            <svg width="48" height="48" viewBox="0 0 48 48" aria-hidden="true">
              <circle cx="24" cy="24" r="24" fill="url(#rank)" />
              <text x="23" y="35" fontSize="29" fontWeight="900" fontStyle="italic" textAnchor="middle" fill="#fff">VS</text>
            </svg>
            多空看盘
          </CardHead>
          <Versus>
            <Side $tone="#f5dcdb" />
            <Side $tone="#d9e8da" />
          </Versus>
        </Card>
      </Cards>

      <BottomBar>
        <IndexLink href="#index">
          <svg width="22" height="7" viewBox="0 0 22 7" aria-hidden="true">
            <path d="M0 7L11 0l11 7z" fill="#777a80" />
          </svg>
          <IndexValue>3902.81</IndexValue>
          <IndexRow><Muted>上证</Muted><span>0.70%</span></IndexRow>
        </IndexLink>
        <BottomItem>
          <svg width="66" height="60" viewBox="0 0 66 60" fill="none" stroke="currentColor" strokeWidth="3" strokeLinecap="round" aria-hidden="true">
            <path d="M18 8A28 28 0 0 1 58 43M50 53A28 28 0 0 1 9 17" />
            <path d="M1 21l9-4 1 0M65 40l-7 4v-5" strokeLinejoin="round" />
            <path d="M24 17l9 10 9-10M23 29h20M23 38h20M33 28v17" strokeLinecap="butt" />
          </svg>
          交易
        </BottomItem>
        <BottomItem>
          <svg width="56" height="60" viewBox="0 0 56 60" fill="none" stroke="currentColor" strokeWidth="3" aria-hidden="true">
            <path d="M38 4H10a8 8 0 0 0-8 8v37a8 8 0 0 0 8 8h36a8 8 0 0 0 8-8V19" />
            <path d="M19 40l3-9L43 10l5 5-21 21z" fill="currentColor" stroke="none" />
            <path d="M46 8l4-4a3.500 3.500 0 0 1 5 5l-4 4z" fill="currentColor" stroke="none" />
          </svg>
          发帖
        </BottomItem>
        <BottomItem>
          <svg width="54" height="60" viewBox="0 0 54 60" fill="none" stroke="currentColor" strokeWidth="3" aria-hidden="true">
            <rect x="2" y="5" width="22" height="23" rx="3" />
            <rect x="2" y="32" width="22" height="23" rx="3" />
            <rect x="29" y="32" width="22" height="23" rx="3" />
            <rect x="31" y="7" width="18" height="18" rx="3" transform="rotate(45 40 16)" />
          </svg>
          功能
        </BottomItem>
        <BottomItem $active>
          <svg width="58" height="60" viewBox="0 0 58 60" fill="none" stroke="currentColor" strokeWidth="3" aria-hidden="true">
            <circle cx="29" cy="30" r="27" />
            <path d="M15 30h28M29 16v28" strokeWidth="3.500" />
          </svg>
          加自选
        </BottomItem>
      </BottomBar>

      <SystemNav>
        <IconButton aria-label="最近任务">
          <svg width="36" height="38" viewBox="0 0 36 38" stroke="currentColor" strokeWidth="3" strokeLinecap="round" aria-hidden="true">
            <path d="M1.500 2.500h33M1.500 19h33M1.500 35.500h33" />
          </svg>
        </IconButton>
        <IconButton aria-label="主屏幕">
          <svg width="36" height="38" viewBox="0 0 36 38" fill="none" stroke="currentColor" strokeWidth="3" aria-hidden="true">
            <rect x="1.500" y="2" width="33" height="34" rx="9" />
          </svg>
        </IconButton>
        <IconButton aria-label="后退">
          <svg width="36" height="38" viewBox="0 0 36 38" fill="none" stroke="currentColor" strokeWidth="3" strokeLinejoin="round" aria-hidden="true">
            <path d="M3 17.500L30.500 2.500q4-1.500 4 2v29q0 3.500-4 2L3 20.500q-2-1.500 0-3z" />
          </svg>
        </IconButton>
      </SystemNav>
    </Shell>
  );
}
